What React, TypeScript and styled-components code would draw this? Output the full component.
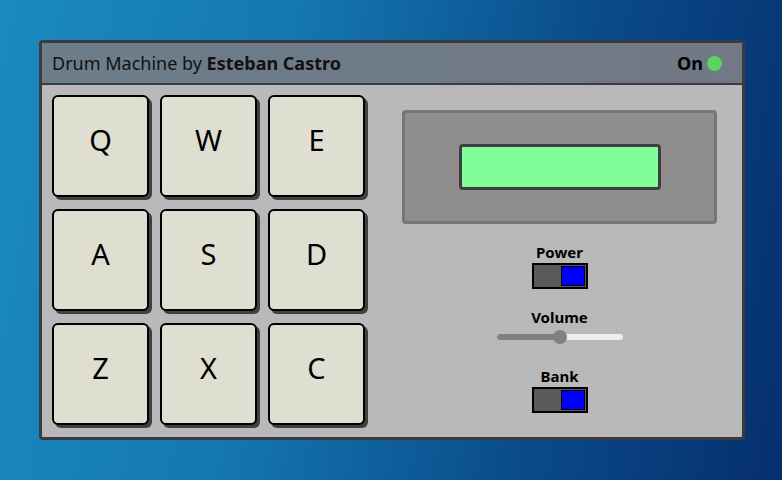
import React, { FC } from "react";
import styled, { createGlobalStyle } from "styled-components";

const GlobalStyle = createGlobalStyle`
  html, body {
    margin: 0;
    padding: 0;
  }
  body {
    width: 782px;
    height: 480px;
    overflow: hidden;
    font-family: "Noto Sans", "Open Sans", sans-serif;
  }
`;

const pads = [
  ["Q", "W", "E"],
  ["A", "S", "D"],
  ["Z", "X", "C"],
];

const App: FC = () => {
  return (
    <Page>
      <GlobalStyle />
      <Machine>
        <Header>
          <Title>
            Drum Machine by <b>Esteban Castro</b>
          </Title>
          <Status>
            On <Led />
          </Status>
        </Header>
        <Body>
          <PadGrid>
            {pads.flat().map((key) => (
              <Pad key={key}>{key}</Pad>
            ))}
          </PadGrid>
          <Controls>
            <Display>
              <Screen />
            </Display>
            <Control>
              <Label>Power</Label>
              <Toggle>
                <Knob />
              </Toggle>
            </Control>
            <Control>
              <Label>Volume</Label>
              <Slider>
                <SliderFill style={{ width: "50%" }} />
                <Thumb style={{ left: "50%" }} />
              </Slider>
            </Control>
            <Control $top={19}>
              <Label>Bank</Label>
              <Toggle>
                <Knob />
              </Toggle>
            </Control>
          </Controls>
        </Body>
      </Machine>
    </Page>
  );
};

const Page = styled.div`
  width: 782px;
  height: 480px;
  box-sizing: border-box;
  padding: 40px 0 0 39px;
  background: linear-gradient(100deg, #1a8bbf 0%, #1477b0 35%, #0a4a8a 70%, #062f6e 100%);
`;

const Machine = styled.div`
  width: 706px;
  height: 400px;
  box-sizing: border-box;
  border: 3px solid #3b3b3b;
  border-radius: 4px;
  background: #b9b9b9;
  display: flex;
  flex-direction: column;
  overflow: hidden;
`;

const Header = styled.div`
  height: 40px;
  flex: none;
  border-bottom: 2px solid #3b3b3b;
  background: linear-gradient(to right, #6c7d8a, #727885);
  display: flex;
  align-items: center;
  justify-content: space-between;
  padding: 0 20px 0 10px;
`;

const Title = styled.div`
  font-size: 18px;
  color: #111;
  b {
    font-weight: 700;
  }
`;

const Status = styled.div`
  display: flex;
  align-items: center;
  gap: 4px;
  font-size: 18px;
  font-weight: 700;
  color: #000;
`;

const Led = styled.span`
  width: 15px;
  height: 15px;
  border-radius: 50%;
  background: #5cd35c;
`;

const Body = styled.div`
  flex: 1;
  display: flex;
  padding: 10px 0 0 10px;
`;

const PadGrid = styled.div`
  display: grid;
  grid-template-columns: repeat(3, 97px);
  grid-auto-rows: 102px;
  column-gap: 11px;
  row-gap: 12px;
`;

const Pad = styled.div`
  box-sizing: border-box;
  border: 2px solid #000;
  border-radius: 6px;
  background: #dedfd0;
  box-shadow: 3px 3px 0 #404040;
  display: flex;
  align-items: center;
  justify-content: center;
  padding-bottom: 14px;
  font-size: 29px;
  color: #000;
`;

const Controls = styled.div`
  flex: 1;
  display: flex;
  flex-direction: column;
  align-items: center;
  padding: 15px 0 0 12px;
`;

const Display = styled.div`
  box-sizing: border-box;
  width: 315px;
  height: 114px;
  border: 3px solid #767676;
  border-radius: 4px;
  background: #8f8e8c;
  display: flex;
  align-items: center;
  justify-content: center;
`;

const Screen = styled.div`
  box-sizing: border-box;
  width: 202px;
  height: 46px;
  border: 3px solid #3e3e3e;
  border-radius: 4px;
  background: #80ff99;
`;

const Control = styled.div<{ $top?: number }>`
  display: flex;
  flex-direction: column;
  align-items: center;
  margin-top: ${(p) => p.$top ?? 19}px;
`;

const Label = styled.div`
  font-size: 15px;
  font-weight: 700;
  color: #000;
  line-height: 18px;
  margin-bottom: 2px;
`;

const Toggle = styled.div`
  box-sizing: border-box;
  width: 56px;
  height: 26px;
  border: 2px solid #000;
  background: #5a5a5a;
  display: flex;
  justify-content: flex-end;
  align-items: center;
  padding: 0 1px;
`;

const Knob = styled.div`
  box-sizing: border-box;
  width: 24px;
  height: 20px;
  border: 1px solid #000;
  background: #0000ff;
`;

const Slider = styled.div`
  position: relative;
  width: 126px;
  height: 6px;
  border-radius: 3px;
  background: #eeeeee;
  margin: 6px 0 8px;
`;

const SliderFill = styled.div`
  height: 100%;
  border-radius: 3px 0 0 3px;
  background: #808080;
`;

const Thumb = styled.div`
  position: absolute;
  top: 50%;
  width: 14px;
  height: 14px;
  border-radius: 50%;
  background: #808080;
  transform: translate(-50%, -50%);
`;

export default App;
